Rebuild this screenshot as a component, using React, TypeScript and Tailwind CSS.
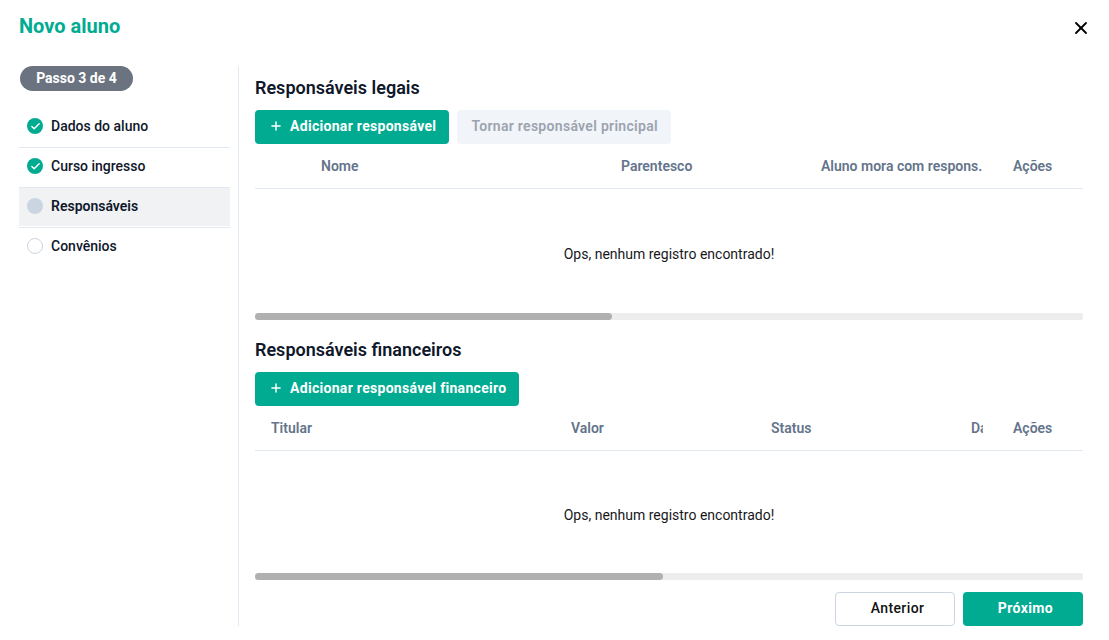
import React from "react";
import { Check, Plus, X } from "lucide-react";

type Column = { label: string; className: string };

const steps = [
  { label: "Dados do aluno", state: "done" },
  { label: "Curso ingresso", state: "done" },
  { label: "Responsáveis", state: "current" },
  { label: "Convênios", state: "todo" },
];

const legalColumns: Column[] = [
  { label: "Nome", className: "w-[300px] ml-[50px]" },
  { label: "Parentesco", className: "w-[200px]" },
  { label: "Aluno mora com respons.", className: "w-[178px]" },
];

const financeColumns: Column[] = [
  { label: "Titular", className: "w-[300px]" },
  { label: "Valor", className: "w-[200px]" },
  { label: "Status", className: "w-[200px]" },
  { label: "Data de vencimento", className: "w-[28px]" },
];

function StepIcon({ state }: { state: string }) {
  if (state === "done") {
    return (
      <span className="flex h-4 w-4 items-center justify-center rounded-full bg-[#00ab92] text-white">
        <Check size={11} strokeWidth={3} />
      </span>
    );
  }
  if (state === "current") return <span className="h-4 w-4 rounded-full bg-[#cbd5e1]" />;
  return <span className="h-4 w-4 rounded-full border border-[#cbd5e1] bg-white" />;
}

function DataTable({ columns, thumb, bodyHeight }: { columns: Column[]; thumb: string; bodyHeight: string }) {
  return (
    <div>
      <div className="flex h-[45px] items-center border-b border-[#e2e8f0] text-sm font-semibold text-[#64748b]">
        {columns.map((col) => (
          <div key={col.label} className={`${col.className} shrink-0 overflow-hidden whitespace-nowrap pl-4`}>
            {col.label}
          </div>
        ))}
        <div className="ml-[14px] w-[86px] shrink-0 pl-4">Ações</div>
      </div>
      <div className={`flex items-center justify-center pt-[6px] text-sm text-[#18181b] ${bodyHeight}`}>
        Ops, nenhum registro encontrado!
      </div>
      <div className="h-[7px] rounded-[2px] bg-[#ededed]">
        <div className={`h-full rounded-[4px] bg-[#b0b0b0] ${thumb}`} />
      </div>
    </div>
  );
}

export default function App() {
  return (
    <div className="h-[640px] w-[1109px] overflow-hidden bg-white font-['Roboto',sans-serif] text-[#0f172a]">
      <div className="flex h-[66px] items-start justify-between pl-[19px] pr-[18px]">
        <h1 className="mt-[13px] text-xl leading-[26px] font-bold text-[#00ab92]">Novo aluno</h1>
        <button className="mt-[18px] text-black">
          <X size={20} strokeWidth={2.2} />
        </button>
      </div>

      <div className="flex h-[560px] pl-[19px] pr-[26px]">
        <aside className="w-[220px] shrink-0 border-r border-[#e2e8f0]">
          <div className="mr-[8px] w-[211px]">
            <span className="ml-px flex h-[25px] w-[113px] items-center justify-center rounded-full bg-[#6b7280] pb-px text-sm font-bold text-white">
              Passo 3 de 4
            </span>
            <ul className="mt-[17px]">
              {steps.map((step, i) => (
                <li
                  key={step.label}
                  className={`h-10 ${i < steps.length - 1 ? "border-b border-[#e2e8f0]" : ""}`}
                >
                  <div
                    className={`flex h-[38px] items-center gap-2 px-2 pb-[2px] text-sm ${
                      step.state === "current" ? "bg-[#f1f2f4] font-semibold" : "font-medium"
                    }`}
                  >
                    <StepIcon state={step.state} />
                    {step.label}
                  </div>
                </li>
              ))}
            </ul>
          </div>
        </aside>

        <main className="ml-4 w-[828px]">
          <h2 className="mt-[10px] text-lg leading-6 font-semibold">Responsáveis legais</h2>
          <div className="mt-[10px] flex gap-2">
            <button className="flex h-[34px] items-center gap-[7px] rounded bg-[#00ab92] pl-[14px] pr-[13px] pb-[2px] text-sm font-bold tracking-[0.3px] text-white">
              <Plus size={14} strokeWidth={2.5} />
              Adicionar responsável
            </button>
            <button className="h-[34px] rounded bg-[#f1f5f9] pl-[14px] pr-[13px] pb-[2px] text-sm font-semibold tracking-[0.3px] text-[#9ca3af]">
              Tornar responsável principal
            </button>
          </div>
          <DataTable columns={legalColumns} thumb="w-[357px]" bodyHeight="h-[124px]" />

          <h2 className="mt-[18px] text-lg leading-6 font-semibold">Responsáveis financeiros</h2>
          <div className="mt-[10px] flex">
            <button className="flex h-[34px] items-center gap-[7px] rounded bg-[#00ab92] pl-[14px] pr-[13px] pb-[2px] text-sm font-bold tracking-[0.3px] text-white">
              <Plus size={14} strokeWidth={2.5} />
              Adicionar responsável financeiro
            </button>
          </div>
          <DataTable columns={financeColumns} thumb="w-[408px]" bodyHeight="h-[122px]" />

          <div className="mt-3 flex justify-end gap-2">
            <button className="h-[34px] w-[120px] rounded border border-[#cbd5e1] bg-white pl-[5px] pb-[2px] text-sm font-medium tracking-[0.4px] text-[#111111]">
              Anterior
            </button>
            <button className="h-[34px] w-[120px] rounded bg-[#00ab92] pl-[5px] pb-[2px] text-sm font-bold tracking-[0.4px] text-white">Próximo</button>
          </div>
        </main>
      </div>
    </div>
  );
}
